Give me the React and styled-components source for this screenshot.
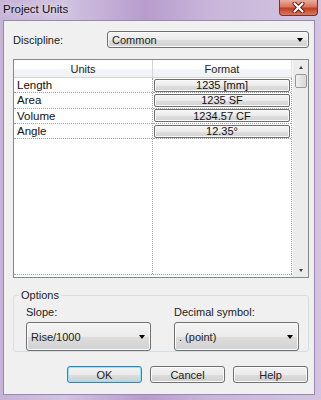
import React from "react";
import styled, { createGlobalStyle } from "styled-components";

const GlobalStyle = createGlobalStyle`
  html, body {
    margin: 0;
    padding: 0;
    background: #ffffff;
  }
  body {
    font-family: "Liberation Sans", Arial, sans-serif;
    font-size: 11px;
    color: #222;
  }
`;

const units = [
  { name: "Length", format: "1235 [mm]" },
  { name: "Area", format: "1235 SF" },
  { name: "Volume", format: "1234.57 CF" },
  { name: "Angle", format: "12.35°" },
];

const App = () => {
  return (
    <>
      <GlobalStyle />
      <Window>
        <TitleBar>
          <Title>Project Units</Title>
          <CloseButton>
            <svg width="13" height="11" viewBox="0 0 13 11">
              <path
                d="M2.5 1.5 L10.5 9.5 M10.5 1.5 L2.5 9.5"
                stroke="#5a1a10"
                strokeWidth="4"
                strokeLinecap="round"
              />
              <path
                d="M2.5 1.5 L10.5 9.5 M10.5 1.5 L2.5 9.5"
                stroke="#ffffff"
                strokeWidth="2.2"
                strokeLinecap="round"
              />
            </svg>
          </CloseButton>
        </TitleBar>
        <Client>
          <FieldRow>
            <FieldLabel>Discipline:</FieldLabel>
            <Select>
              <span>Common</span>
              <Arrow />
            </Select>
          </FieldRow>

          <Table>
            <Grid>
              <Header>
                <HeaderCell>Units</HeaderCell>
                <HeaderCell $last>Format</HeaderCell>
              </Header>
              <Body>
                <Column $width="139px">
                  {units.map((u) => (
                    <Cell key={u.name}>{u.name}</Cell>
                  ))}
                </Column>
                <Column>
                  {units.map((u) => (
                    <Cell key={u.name} $center>
                      <FormatButton>{u.format}</FormatButton>
                    </Cell>
                  ))}
                </Column>
              </Body>
            </Grid>
            <ScrollBar>
              <ScrollArrow>
                <Tri $up />
              </ScrollArrow>
              <Thumb />
              <Track />
              <ScrollArrow>
                <Tri />
              </ScrollArrow>
            </ScrollBar>
          </Table>

          <Group>
            <Legend>Options</Legend>
            <GroupField>
              <SmallLabel>Slope:</SmallLabel>
              <Select>
                <span>Rise/1000</span>
                <Arrow />
              </Select>
            </GroupField>
            <GroupField>
              <SmallLabel>Decimal symbol:</SmallLabel>
              <Select>
                <span>. (point)</span>
                <Arrow />
              </Select>
            </GroupField>
          </Group>

          <ButtonRow>
            <Button $default>OK</Button>
            <Button>Cancel</Button>
            <Button>Help</Button>
          </ButtonRow>
        </Client>
      </Window>
    </>
  );
};

export default App;

const Window = styled.div`
  width: 321px;
  height: 400px;
  box-sizing: border-box;
  display: flex;
  flex-direction: column;
  padding: 0 6px 5px 3px;
  background: linear-gradient(
    to right,
    #c6b3d8 0%,
    #d2c3e1 20%,
    #b79ccd 45%,
    #c8b5d9 65%,
    #d3c5e1 100%
  );
`;

const TitleBar = styled.div`
  height: 20px;
  display: flex;
  justify-content: space-between;
  align-items: flex-start;
`;

const Title = styled.div`
  font-size: 11.5px;
  line-height: 19px;
  color: #111;
  text-shadow: 0 0 6px rgba(255, 255, 255, 0.9);
`;

const CloseButton = styled.div`
  width: 39px;
  height: 16px;
  margin-right: -3px;
  box-sizing: border-box;
  border: 1px solid #7a3024;
  border-top: none;
  border-radius: 0 0 4px 4px;
  display: flex;
  align-items: center;
  justify-content: center;
  background: linear-gradient(to bottom, #e9ae9d 0%, #d8765e 45%, #c23c22 55%, #d97a60 100%);
`;

const Client = styled.div`
  flex: 1;
  display: flex;
  flex-direction: column;
  background: #f0f0f0;
  border: 1px solid #9a88b2;
  padding: 10px 5px 0 9px;
`;

const FieldRow = styled.div`
  display: flex;
  align-items: center;
  height: 17px;
`;

const FieldLabel = styled.div`
  width: 94px;
  flex-shrink: 0;
`;

const Select = styled.div`
  flex: 1;
  height: 17px;
  box-sizing: border-box;
  display: flex;
  align-items: center;
  justify-content: space-between;
  padding: 0 5px 0 4px;
  border: 1px solid #707070;
  border-radius: 3px;
  background: linear-gradient(to bottom, #f4f4f4 0%, #ebebeb 50%, #dddddd 51%, #d2d2d2 100%);
  box-shadow: inset 0 0 0 1px #fbfbfb;
`;

const Arrow = styled.div`
  width: 0;
  height: 0;
  border-left: 3.5px solid transparent;
  border-right: 3.5px solid transparent;
  border-top: 4px solid #000;
`;

const Table = styled.div`
  margin-top: 11px;
  height: 219px;
  box-sizing: border-box;
  border: 1px solid #828790;
  background: #fff;
  display: flex;
`;

const Grid = styled.div`
  flex: 1;
  display: flex;
  flex-direction: column;
  padding-bottom: 2px;
`;

const Header = styled.div`
  display: grid;
  grid-template-columns: 139px 1fr;
  height: 18px;
  box-sizing: border-box;
  border-bottom: 1px solid #d5d5d5;
`;

const HeaderCell = styled.div`
  display: flex;
  align-items: center;
  justify-content: center;
  background: linear-gradient(to bottom, #ffffff 0%, #ffffff 50%, #f4f5f7 51%, #f1f2f4 100%);
  border-right: 1px solid ${(p) => (p.$last ? "#e3e3e3" : "#d5d5d5")};
`;

const Body = styled.div`
  flex: 1;
  display: flex;
  border-bottom: 1px dotted #a0a0a0;
`;

const Column = styled.div`
  width: ${(p) => p.$width || "auto"};
  flex: ${(p) => (p.$width ? "none" : "1")};
  box-sizing: border-box;
  border-right: 1px dotted #a0a0a0;
  display: flex;
  flex-direction: column;
`;

const Cell = styled.div`
  height: 15.3px;
  box-sizing: border-box;
  border-bottom: 1px dotted #a0a0a0;
  display: flex;
  align-items: center;
  justify-content: ${(p) => (p.$center ? "center" : "flex-start")};
  padding: ${(p) => (p.$center ? "0 1px" : "0 3px")};
  font-size: 11.5px;
  color: #111;
`;

const FormatButton = styled.div`
  width: 100%;
  height: 13px;
  box-sizing: border-box;
  border: 1px solid #6e6e6e;
  border-radius: 2px;
  display: flex;
  align-items: center;
  justify-content: center;
  font-size: 11px;
  background: linear-gradient(to bottom, #f6f6f6 0%, #ececec 50%, #dedede 51%, #d4d4d4 100%);
  box-shadow: inset 0 0 0 1px #fafafa;
`;

const ScrollBar = styled.div`
  width: 15px;
  display: flex;
  flex-direction: column;
  align-items: center;
  background: #ececec;
  border-left: 1px solid #f6f6f6;
`;

const ScrollArrow = styled.div`
  height: 14px;
  width: 100%;
  display: flex;
  align-items: center;
  justify-content: center;
`;

const Tri = styled.div`
  width: 0;
  height: 0;
  border-left: 2.5px solid transparent;
  border-right: 2.5px solid transparent;
  ${(p) =>
    p.$up ? "border-bottom: 3px solid #404040;" : "border-top: 3px solid #404040;"}
`;

const Thumb = styled.div`
  width: 12px;
  height: 14px;
  box-sizing: border-box;
  border: 1px solid #979797;
  border-radius: 2px;
  background: linear-gradient(to right, #f3f3f3, #e3e3e3 50%, #d8d8d8);
`;

const Track = styled.div`
  flex: 1;
`;

const Group = styled.div`
  position: relative;
  margin-top: 17px;
  height: 57px;
  box-sizing: border-box;
  border: 1px solid #d5dfe5;
  border-radius: 3px;
  display: flex;
  gap: 23px;
  padding: 10px 9px 0 12px;
`;

const Legend = styled.div`
  position: absolute;
  top: -8px;
  left: 5px;
  padding: 0 2px;
  background: #f0f0f0;
  line-height: 14px;
`;

const GroupField = styled.div`
  width: 125px;
  display: flex;
  flex-direction: column;
  gap: 3px;
`;

const SmallLabel = styled.div`
  height: 13px;
  line-height: 13px;
`;

const ButtonRow = styled.div`
  margin-top: 14px;
  display: flex;
  justify-content: flex-end;
  gap: 8px;
  padding-right: 1px;
`;

const Button = styled.div`
  width: 75px;
  height: 17px;
  box-sizing: border-box;
  display: flex;
  align-items: center;
  justify-content: center;
  border: 1px solid ${(p) => (p.$default ? "#3c7fb1" : "#707070")};
  border-radius: 3px;
  background: linear-gradient(to bottom, #f2f2f2 0%, #ebebeb 50%, #dddddd 51%, #cfcfcf 100%);
  box-shadow: inset 0 0 0 1px ${(p) => (p.$default ? "#8ee4f9" : "#fbfbfb")};
`;
